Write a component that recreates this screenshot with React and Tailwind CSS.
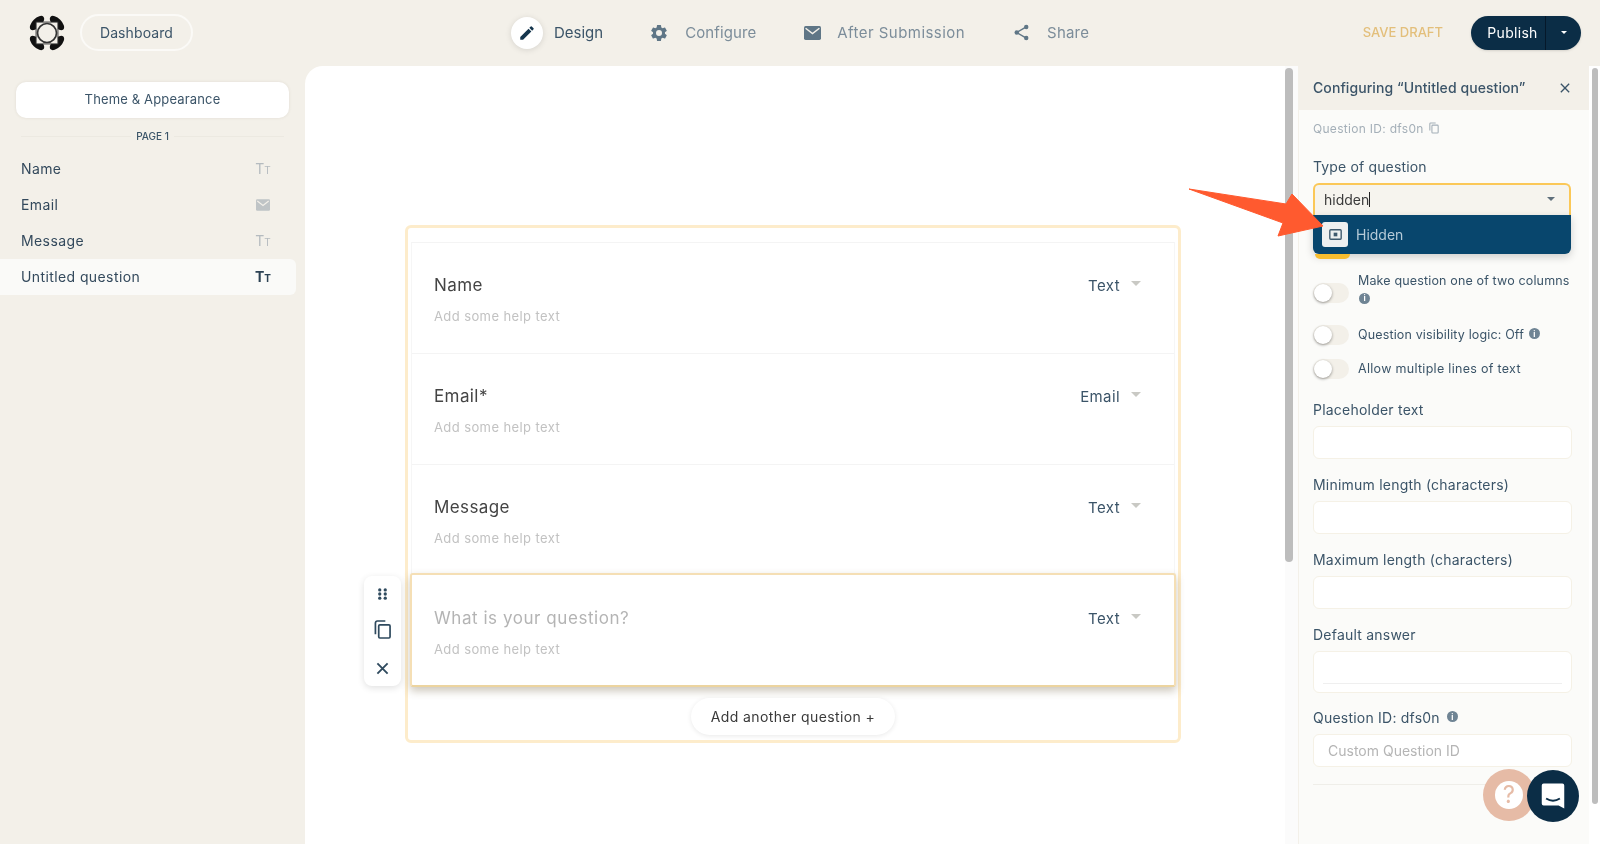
import React from "react";

const F = { fontFamily: '"Inter", "Open Sans", sans-serif' };

function Tt({ color = "#b5bbbf", bold = false }) {
  return (
    <span className={`text-[14px] leading-none ${bold ? "font-bold" : "font-normal"}`} style={{ color }}>
      T<span className="text-[10px]">T</span>
    </span>
  );
}

function Mail({ className, color }) {
  return (
    <svg viewBox="0 0 16 13" className={className}>
      <rect x="0" y="0" width="16" height="13" rx="1.5" fill={color} />
      <path d="M1.5 2 L8 7 L14.5 2" fill="none" stroke="#f3f0e9" strokeWidth="1.4" />
    </svg>
  );
}

function Logo() {
  const petal = (cx, cy, rot) => <ellipse cx={cx} cy={cy} rx="9.5" ry="4.8" transform={`rotate(${rot} ${cx} ${cy})`} fill="#111" />;
  return (
    <svg viewBox="0 0 40 40" className="w-[38px] h-[38px]">
      {petal(9.5, 9.5, -45)}
      {petal(30.5, 9.5, 45)}
      {petal(9.5, 30.5, 45)}
      {petal(30.5, 30.5, -45)}
      <rect x="8.5" y="8.5" width="23" height="23" fill="#f3f0e9" stroke="#333" strokeWidth="1" />
      <circle cx="20" cy="20" r="10" fill="#f3f0e9" stroke="#333" strokeWidth="1.8" />
    </svg>
  );
}

function NavItem({ icon, label, active, labelClass = "" }) {
  return (
    <div className="flex items-center">
      <div className={`flex items-center justify-center w-8 h-8 rounded-full ${active ? "bg-white shadow-[0_1px_6px_rgba(0,0,0,0.12)]" : ""}`}>{icon}</div>
      <span className={`mt-[1px] text-[15px] ${labelClass} ${active ? "text-[#3b5468]" : "text-[#7c8d9a]"}`}>{label}</span>
    </div>
  );
}

function SideRow({ label, icon, active }) {
  return (
    <div className={`flex items-center justify-between h-9 pb-[1px] pl-[21px] pr-[26px] mr-[9px] text-[14px] tracking-[0.4px] text-[#33495c] ${active ? "bg-[#fafaf8] rounded-r-md" : ""}`}>
      <span>{label}</span>
      <span className="w-[14px] flex justify-center tracking-normal">{icon}</span>
    </div>
  );
}

function Question({ label, type, placeholder, active }) {
  return (
    <div
      className={`flex justify-between pl-[22px] pr-[33px] ${
        active
          ? "pt-[31px] h-[114px] -mt-[3px] relative bg-white border-2 border-[#f5dfb5] border-b-[#ecd49f] rounded-[3px] shadow-[0_4px_9px_rgba(90,70,30,0.3)] -mx-px"
          : "pt-[30px] h-[111px] border-b border-[#f4f4f4]"
      }`}
    >
      <div>
        <div className={`text-[17px] leading-[24px] ${placeholder ? "text-[#b4b4b4] tracking-[0.55px]" : "text-[#444444] tracking-[0.4px]"}`}>{label}</div>
        <div className="mt-[10px] text-[13px] leading-[18px] tracking-[0.4px] text-[#c2c2c2]">Add some help text</div>
      </div>
      <div className="flex items-start pt-[2px]">
        <span className="text-[15px] leading-[22px] tracking-[0.4px] text-[#3b5468]">{type}</span>
        <span className="ml-[11px] mt-[6px] w-0 h-0 border-x-[5px] border-x-transparent border-t-[5px] border-t-[#c9c9c4]" />
      </div>
    </div>
  );
}

function Toggle() {
  return (
    <div className="relative w-9 h-5 rounded-full bg-[#f3f0e9] shrink-0">
      <div className="absolute left-[1px] top-[1px] w-[18px] h-[18px] rounded-full bg-white shadow-[0_1px_3px_rgba(0,0,0,0.4)]" />
    </div>
  );
}

function Info({ className }) {
  return (
    <span className={`inline-flex items-center justify-center w-[11px] h-[11px] rounded-full bg-[#6f8494] text-white text-[8px] font-bold leading-none tracking-normal ${className}`}>i</span>
  );
}

function Field({ label, children, h = "h-[33px]", mt }) {
  return (
    <div className={mt}>
      <div className="text-[14px] leading-[18px] tracking-[0.22px] text-[#3b5468]">{label}</div>
      <div className={`relative mt-[7px] ${h} rounded-[6px] border border-[#f5f1e6] bg-white`}>{children}</div>
    </div>
  );
}

export default function App() {
  return (
    <div className="w-[1600px] h-[844px] overflow-hidden bg-[#f3f0e9] flex flex-col relative blur-[0.5px]" style={F}>
      {/* Top bar */}
      <header className="h-[66px] shrink-0 flex items-center relative pb-[1px]">
        <div className="ml-[28px]"><Logo /></div>
        <div className="ml-[14px] w-[113px] h-[37px] rounded-full border-2 border-[#fbfaf7] flex items-center justify-center text-[14px] tracking-[0.1px] text-[#3b5468]">Dashboard</div>
        <div className="ml-[318px] flex items-center">
          <NavItem active label="Design" labelClass="ml-[11px]" icon={
            <svg viewBox="0 0 24 24" className="w-[18px] h-[18px]" fill="#15354d"><path d="M3 17.25V21h3.75L17.81 9.94l-3.75-3.75L3 17.25zM20.71 7.04a1 1 0 0 0 0-1.41l-2.34-2.34a1 1 0 0 0-1.41 0l-1.83 1.83 3.75 3.75 1.83-1.83z" /></svg>
          } />
          <div className="ml-[40px]">
            <NavItem label="Configure" labelClass="ml-[10px] tracking-[0.1px]" icon={
              <svg viewBox="0 0 24 24" className="w-[20px] h-[20px]" fill="#5f7686"><path d="M19.14 12.94c.04-.3.06-.61.06-.94s-.02-.64-.07-.94l2.03-1.58a.5.5 0 0 0 .12-.61l-1.92-3.32a.5.5 0 0 0-.59-.22l-2.39.96a7 7 0 0 0-1.62-.94l-.36-2.54a.5.5 0 0 0-.49-.41h-3.84a.5.5 0 0 0-.48.41l-.36 2.54c-.59.24-1.13.57-1.62.94l-2.39-.96a.5.5 0 0 0-.59.22L2.71 8.87a.5.5 0 0 0 .12.61l2.03 1.58c-.05.3-.07.62-.07.94s.02.64.07.94l-2.03 1.58a.5.5 0 0 0-.12.61l1.92 3.32c.12.22.37.29.59.22l2.39-.96c.5.38 1.03.7 1.62.94l.36 2.54c.05.24.24.41.48.41h3.84c.24 0 .44-.17.47-.41l.36-2.54a7 7 0 0 0 1.62-.94l2.39.96c.22.08.47 0 .59-.22l1.92-3.32a.5.5 0 0 0-.12-.61l-2.01-1.58zM12 15.6a3.6 3.6 0 1 1 0-7.2 3.6 3.6 0 0 1 0 7.2z" /></svg>
            } />
          </div>
          <div className="ml-[40px]">
            <NavItem label="After Submission" labelClass="ml-[9px] tracking-[0.45px]" icon={<Mail className="w-[17px] h-[14px]" color="#5f7686" />} />
          </div>
          <div className="ml-[40px]">
            <NavItem label="Share" labelClass="ml-[10px] tracking-[0.2px]" icon={
              <svg viewBox="0 0 24 24" className="w-[19px] h-[19px]" fill="none"><path d="M18 5 L6 12 L18 19" stroke="#5f7686" strokeWidth="1.8" /><circle cx="18" cy="5" r="2.8" fill="#5f7686" /><circle cx="6" cy="12" r="2.8" fill="#5f7686" /><circle cx="18" cy="19" r="2.8" fill="#5f7686" /></svg>
            } />
          </div>
        </div>
        <div className="ml-auto mr-[19px] flex items-center">
          <span className="text-[13px] text-[#e3bf7b] font-medium mr-[28px]">SAVE DRAFT</span>
          <div className="w-[110px] h-[34px] rounded-full bg-[#0b2d46] flex items-center text-white text-[14px] shadow-sm">
            <span className="w-[75px] h-full flex items-center justify-center pl-[9px] tracking-[0.3px] border-r border-[#05182a]">Publish</span>
            <span className="flex-1 flex justify-center"><span className="w-0 h-0 border-x-[3px] border-x-transparent border-t-[3px] border-t-white" /></span>
          </div>
        </div>
      </header>

      <div className="flex-1 flex min-h-0">
        {/* Left sidebar */}
        <aside className="w-[305px] shrink-0">
          <div className="mx-[16px] mt-[16px] h-[36px] rounded-[10px] bg-white shadow-[0_0_3px_rgba(120,110,90,0.15)] flex items-center justify-center text-[13px] tracking-[0.15px] text-[#3b5468]">Theme &amp; Appearance</div>
          <div className="mx-[21px] mt-[11px] flex items-center gap-[5px]">
            <div className="flex-1 h-px bg-[#ece9e1]" />
            <span className="text-[10px] leading-[14px] font-medium text-[#3b5468]">PAGE 1</span>
            <div className="flex-1 h-px bg-[#ece9e1]" />
          </div>
          <div className="mt-[8px]">
            <SideRow label="Name" icon={<Tt />} />
            <SideRow label="Email" icon={<Mail className="w-[14px] h-[12px]" color="#bfc4c6" />} />
            <SideRow label="Message" icon={<Tt />} />
            <SideRow label="Untitled question" active icon={<Tt color="#2c4254" bold />} />
          </div>
        </aside>

        {/* Canvas */}
        <main className="flex-1 bg-white rounded-tl-[18px] flex min-w-0">
          <div className="flex-1 relative pl-[100px] pr-[104px] pt-[159px] min-w-0">
            <div className="relative h-[518px] rounded-[6px] border-[3px] border-[#fdeccb] px-[3px] pt-[14px]">
              <div className="border-t border-[#f4f4f4] border-x border-x-[#f6f6f6]">
                <Question label="Name" type="Text" />
                <Question label="Email*" type="Email" />
                <Question label="Message" type="Text" />
              </div>
              <Question label="What is your question?" type="Text" placeholder active />
              <div className="absolute left-1/2 -translate-x-1/2 bottom-[5px] w-[204px] h-[37px] rounded-full bg-white shadow-[0_1px_5px_rgba(0,0,0,0.09)] flex items-center justify-center text-[14px] tracking-[0.4px] text-[#3a3a3a]">Add another question +</div>
              {/* Side toolbar */}
              <div className="absolute left-[-44px] top-[348px] w-[37px] h-[110px] rounded-[8px] bg-white shadow-[0_2px_7px_rgba(0,0,0,0.12)] flex flex-col items-center justify-between py-[9px]">
                <svg viewBox="0 0 12 14" className="w-[11px] h-[14px] mt-[2px]" fill="#2f4a5e">
                  <circle cx="3" cy="2.5" r="1.8" /><circle cx="9" cy="2.5" r="1.8" />
                  <circle cx="3" cy="7" r="1.8" /><circle cx="9" cy="7" r="1.8" />
                  <circle cx="3" cy="11.5" r="1.8" /><circle cx="9" cy="11.5" r="1.8" />
                </svg>
                <svg viewBox="0 0 18 20" className="w-[17px] h-[19px] -translate-y-[2px]" fill="none" stroke="#2f4a5e" strokeWidth="1.8">
                  <rect x="5" y="5" width="12" height="14" rx="1.2" />
                  <path d="M1.5 15 V3 a2 2 0 0 1 2 -2 H12" />
                </svg>
                <svg viewBox="0 0 14 14" className="w-[13px] h-[13px] mb-[2px]" fill="none" stroke="#2f4a5e" strokeWidth="2">
                  <path d="M1.5 1.5 L12.5 12.5 M12.5 1.5 L1.5 12.5" />
                </svg>
              </div>
            </div>
          </div>
          {/* scrollbar of canvas */}
          <div className="w-[13px] shrink-0 bg-[#fbfbfb]">
            <div className="w-[8px] h-[494px] mt-[2px] rounded-full bg-[#bdbdbd]" />
          </div>
        </main>

        {/* Right panel */}
        <aside className="w-[302px] shrink-0 flex bg-white">
          <div className="flex-1 min-w-0 bg-[#fbfbf9] border-l border-[#f3f0e9]">
            <div className="h-[44px] bg-[#f3f0e9] pb-[1px] pl-[14px] pr-[19px] flex items-center justify-between">
              <span className="text-[14px] tracking-[0.08px] text-[#3b5468] font-medium">Configuring “Untitled question”</span>
              <svg viewBox="0 0 12 12" className="w-[10px] h-[10px]" fill="none" stroke="#3b5468" strokeWidth="1.6"><path d="M1 1 L11 11 M11 1 L1 11" /></svg>
            </div>
            <div className="pl-[14px] pr-[17px]">
              <div className="mt-[10px] h-[18px] flex items-center text-[12px] tracking-[0.3px] text-[#a4afb8]">
                Question ID: dfs0n
                <svg viewBox="0 0 12 14" className="ml-[5px] -mt-[2px] w-[10px] h-[12px]" fill="none" stroke="#a4afb8" strokeWidth="1.3"><rect x="3.5" y="3.5" width="7.5" height="9.5" rx="1" /><path d="M1 10 V2 a1 1 0 0 1 1 -1 H8" /></svg>
              </div>
              <div className="mt-[20px] text-[14px] leading-[18px] tracking-[0.15px] text-[#3b5468]">Type of question</div>
              <div className="relative mt-[7px] h-[32px] w-[258px] rounded-t-[6px] border-2 border-b-0 border-[#fbc858] bg-[#f6f4ee] flex items-center pb-[1px] pl-[9px] text-[14px] text-[#3a3a3a]">
                <span>hidden</span><span className="w-px h-[15px] bg-[#222]" />
                <span className="absolute right-[14px] top-[12px] w-0 h-0 border-x-[4px] border-x-transparent border-t-[4px] border-t-[#5f6f7b]" />
              </div>
              {/* Dropdown */}
              <div className="relative h-[39px] w-[258px] rounded-b-[6px] bg-[#08466d] shadow-[0_3px_8px_rgba(0,0,0,0.18)] flex items-center pl-[9px] z-10">
                <div className="w-[26px] h-[25px] rounded-[3px] bg-[#eef0f0] flex items-center justify-center">
                  <svg viewBox="0 0 14 12" className="w-[13px] h-[11px]" fill="none"><rect x="0.8" y="0.8" width="12.4" height="10.4" rx="1" stroke="#3f5a6e" strokeWidth="1.5" /><rect x="5" y="4" width="4" height="4" fill="#3f5a6e" /></svg>
                </div>
                <span className="ml-[8px] text-[14px] text-[#b6cbd8]">Hidden</span>
                <div className="absolute left-[2px] top-[39px] w-[35px] h-[5px] rounded-b-[5px] bg-[#f7bd2f] -z-10" />
              </div>

              <div className="mt-[19px] flex items-start h-[46px]">
                <div className="mt-[10px]"><Toggle /></div>
                <div className="ml-[9px] text-[12.5px] leading-[16px] tracking-[0.15px] text-[#3b5468]">
                  <div className="whitespace-nowrap">Make question one of two columns</div>
                  <Info className="ml-[1px]" />
                </div>
              </div>
              <div className="mt-[6px] flex items-center h-[20px]">
                <Toggle />
                <span className="ml-[9px] text-[12.5px] tracking-[0.15px] text-[#3b5468]">Question visibility logic: Off</span>
                <Info className="ml-[5px] -mt-[3px]" />
              </div>
              <div className="mt-[14px] flex items-center h-[20px]">
                <Toggle />
                <span className="ml-[9px] text-[12.5px] tracking-[0.3px] text-[#3b5468]">Allow multiple lines of text</span>
              </div>

              <Field label="Placeholder text" mt="mt-[22px]" />
              <Field label="Minimum length (characters)" mt="mt-[17px]" />
              <Field label="Maximum length (characters)" mt="mt-[17px]" />
              <Field label="Default answer" mt="mt-[17px]" h="h-[42px]">
                <div className="absolute left-[9px] right-[9px] bottom-[8px] h-px bg-[#efefef]" />
              </Field>
              <div className="mt-[16px]">
                <div className="text-[14px] leading-[18px] tracking-[0.22px] text-[#3b5468] flex items-center">Question ID: dfs0n<Info className="ml-[7px] -mt-[3px]" /></div>
                <div className="mt-[7px] h-[33px] rounded-[6px] border border-[#f5f1e6] bg-white flex items-center pl-[14px] text-[14px] text-[#b5b5b5]">Custom Question ID</div>
              </div>
              <div className="mt-[17px] h-px bg-[#efeee9]" />
            </div>
          </div>
          <div className="w-[11px] shrink-0 pl-[3px] bg-white">
            <div className="w-[6px] h-[736px] mt-[2px] rounded-full bg-[#bdbdbd]" />
          </div>
        </aside>
      </div>

      {/* Annotation arrow */}
      <svg className="absolute left-[1185px] top-[185px] z-20 pointer-events-none" width="145" height="55" viewBox="1185 185 145 55">
        <path d="M1189 189 L1286 204 L1292 194 L1323 226 L1278 236 L1283 223 Z" fill="#ff5a2f" stroke="#ff5a2f" strokeWidth="1" strokeLinejoin="round" />
      </svg>

      {/* Floating help */}
      <div className="absolute left-[1483px] top-[769px] w-[52px] h-[52px] rounded-full bg-[#e6bba6] flex items-center justify-center z-20">
        <div className="w-[28px] h-[28px] rounded-full bg-white flex items-center justify-center text-[#e6bba6] text-[24px]">?</div>
      </div>
      <div className="absolute left-[1527px] top-[770px] w-[52px] h-[52px] rounded-full bg-[#0b2d46] flex items-center justify-center z-30">
        <svg viewBox="0 0 24 24" className="w-[30px] h-[30px]">
          <path d="M3 3.5 A1.5 1.5 0 0 1 4.5 2 H19.5 A1.5 1.5 0 0 1 21 3.5 V22 L16.5 19.5 H4.5 A1.5 1.5 0 0 1 3 18 Z" fill="#fff" />
          <path d="M6.5 14 Q12 17.5 17.5 14" fill="none" stroke="#0b2d46" strokeWidth="1.6" />
        </svg>
      </div>
    </div>
  );
}
